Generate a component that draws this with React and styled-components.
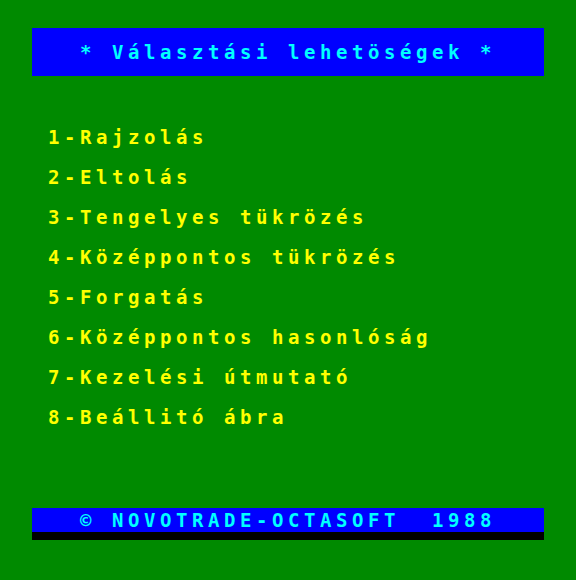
import React from 'react';
import styled, { createGlobalStyle } from 'styled-components';

const GlobalStyle = createGlobalStyle`
  html, body {
    margin: 0;
    padding: 0;
    background: #008a00;
  }
`;

const Screen = styled.div`
  width: 576px;
  height: 580px;
  background: #008a00;
  padding: 28px 32px 0;
  box-sizing: border-box;
  font-family: "DejaVu Sans Mono", "Liberation Mono", monospace;
  font-weight: bold;
  font-size: 19px;
  letter-spacing: 4.56px;
  white-space: pre;
`;

const TitleBar = styled.div`
  height: 48px;
  line-height: 48px;
  background: #0000ff;
  color: #00ffff;
  padding-left: 48px;
`;

const Menu = styled.ul`
  list-style: none;
  margin: 41px 0 0;
  padding: 0 0 0 16px;
  height: 320px;
`;

const Item = styled.li`
  height: 40px;
  line-height: 40px;
  color: #ffff00;
`;

const Footer = styled.div`
  margin-top: 71px;
  background: #0000ff;
  border-bottom: 8px solid #000000;
  height: 24px;
  line-height: 24px;
  color: #00ffff;
  padding-left: 48px;
`;

const items = [
  '1-Rajzolás',
  '2-Eltolás',
  '3-Tengelyes tükrözés',
  '4-Középpontos tükrözés',
  '5-Forgatás',
  '6-Középpontos hasonlóság',
  '7-Kezelési útmutató',
  '8-Beállitó ábra',
];

export default function App() {
  return (
    <Screen>
      <GlobalStyle />
      <TitleBar>* Választási lehetöségek *</TitleBar>
      <Menu>
        {items.map((label) => (
          <Item key={label}>{label}</Item>
        ))}
      </Menu>
      <Footer>© NOVOTRADE-OCTASOFT  1988</Footer>
    </Screen>
  );
}
